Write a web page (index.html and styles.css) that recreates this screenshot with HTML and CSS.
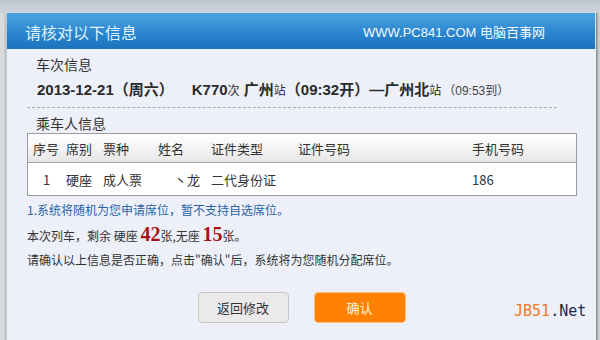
FILE: index.html
```html
<!DOCTYPE html>
<html lang="zh-CN">
<head>
<meta charset="utf-8">
<title>请核对以下信息</title>
<link rel="stylesheet" href="styles.css">
</head>
<body>
<div class="screen">
  <div class="side-left"></div>
  <div class="dialog">
    <div class="dlg-head">
      <span class="dlg-title">请核对以下信息</span>
      <span class="dlg-site">WWW.PC841.COM 电脑百事网</span>
    </div>
    <div class="dlg-body">
      <div class="sec-title">车次信息</div>
      <div class="train"><span class="t-date">2013-12-21（周六）</span><span class="t-no">K770</span><span class="t-small">次</span> <span class="t-st">广州</span><span class="t-small">站</span><span class="t-st">（09:32开）—广州北</span><span class="t-small">站</span><span class="t-arr">（09:53到）</span></div>
      <div class="dash"></div>
      <div class="sec-title">乘车人信息</div>
      <div class="ptable">
        <div class="prow phead">
          <span class="c1">序号</span><span class="c2">席别</span><span class="c3">票种</span><span class="c4">姓名</span><span class="c5">证件类型</span><span class="c6">证件号码</span><span class="c7">手机号码</span>
        </div>
        <div class="prow pbody">
          <span class="c1 num">1</span><span class="c2">硬座</span><span class="c3">成人票</span><span class="c4 name">丶龙</span><span class="c5">二代身份证</span><span class="c6"></span><span class="c7">186</span>
        </div>
      </div>
      <div class="note blue">1.系统将随机为您申请席位，暂不支持自选席位。</div>
      <div class="note">本次列车，剩余 硬座 <b class="big">42</b>张,无座 <b class="big">15</b>张。</div>
      <div class="note">请确认以上信息是否正确，点击"确认"后，系统将为您随机分配席位。</div>
      <div class="btns">
        <button class="btn btn-back">返回修改</button>
        <button class="btn btn-ok">确认</button>
      </div>
    </div>
    <div class="mark"><span class="mk-a">JB51</span><span class="mk-b">.Net</span></div>
  </div>
  <div class="side-right"></div>
</div>
</body>
</html>
```

FILE: styles.css
```css
html, body {
  margin: 0;
  padding: 0;
}
body {
  width: 600px;
  height: 340px;
  overflow: hidden;
  background: linear-gradient(#bcc5ce, #cfd5db 13px, #d3d6d9 13px);
  font-family: "Noto Sans CJK SC", "Liberation Sans", sans-serif;
  color: #333;
}
.screen {
  display: flex;
  padding-top: 13px;
  height: 327px;
}
.side-left {
  width: 6px;
  background: linear-gradient(90deg, #d8dadc 0, #d8dadc 4px, #b9bcbf 5px, #c9ccce 6px);
}
.side-right {
  width: 4px;
  background: linear-gradient(90deg, #8e9194 0, #8e9194 1px, #c4c7ca 2px, #cfd2d5 4px);
}
.dialog {
  position: relative;
  width: 589px;
  border-left: 1px solid #c3c8cd;
  background: #edf0f8;
  display: flex;
  flex-direction: column;
}
.dlg-head {
  height: 36px;
  background: linear-gradient(#4aa4e2, #2b86cf 55%, #1c72bd);
  display: flex;
  align-items: center;
  justify-content: space-between;
  padding: 0 50px 0 18px;
  border-right: 1px solid #cfe3f3;
}
.dlg-title {
  font-size: 16px;
  color: #dff3ff;
  margin-top: 2px;
}
.dlg-site {
  font-family: "Liberation Sans", "Noto Sans CJK SC", sans-serif;
  font-size: 13px;
  color: #f4faff;
}
.dlg-body {
  padding: 0 19px 0 20px;
}
.sec-title {
  font-size: 14px;
  line-height: 20px;
  padding-left: 9px;
  margin-top: 5px;
  color: #333;
}
.train {
  margin-top: 6px;
  line-height: 20px;
  padding-left: 10px;
  font-family: "Liberation Sans", "Noto Sans CJK SC", sans-serif;
  font-size: 15px;
  font-weight: bold;
  color: #2b2b2b;
  white-space: nowrap;
}
.t-date { margin-right: 18px; }
.t-small {
  font-weight: normal;
  font-size: 12px;
  font-family: "Noto Sans CJK SC", sans-serif;
}
.t-arr {
  font-weight: normal;
  font-size: 12px;
  color: #444;
  margin-left: 2px;
}
.dash {
  margin-top: 6px;
  margin-right: 20px;
  border-top: 1px dashed #a9aab0;
}
.dash + .sec-title {
  margin-top: 5px;
}
.ptable {
  border: 1px solid #9c9c9c;
  background: #fff;
}
.prow {
  display: flex;
  align-items: center;
  font-size: 13px;
  padding-left: 5px;
}
.phead {
  height: 28px;
  background: linear-gradient(#ffffff, #f4f4f4 50%, #e6e6e6);
  border-bottom: 1px solid #a4a4a4;
}
.pbody {
  height: 32px;
}
.c1 { width: 33px; }
.c2 { width: 37px; }
.c3 { width: 55px; }
.c4 { width: 53px; }
.c5 { width: 87px; }
.c6 { width: 174px; }
.c7 { flex: 1; }
.num { padding-left: 10px; width: 23px; }
.name { padding-left: 16px; width: 37px; }
.note {
  font-size: 12px;
  line-height: 24px;
  height: 24px;
  color: #333;
}
.note.blue {
  margin-top: 2px;
  color: #2a64a8;
}
.note + .note { margin-top: 2px; }
.note + .note + .note { margin-top: 0; }
.big {
  font-family: "Liberation Serif", serif;
  font-size: 20px;
  font-weight: bold;
  color: #a41414;
  line-height: 20px;
}
.btns {
  display: flex;
  justify-content: center;
  gap: 25px;
  margin-top: 20px;
  margin-left: -20px;
  margin-right: -19px;
}
.btn {
  width: 92px;
  height: 31px;
  border-radius: 4px;
  font-family: "Noto Sans CJK SC", sans-serif;
  font-size: 13px;
  padding: 0;
}
.btn-back {
  width: 91px;
  background: #ebe9ea;
  border: 1px solid #c6c6c6;
  color: #333;
}
.btn-ok {
  background: #ff8103;
  border: 1px solid #ffbf7a;
  color: #fff4d6;
}
.mark {
  position: absolute;
  left: 507px;
  top: 289px;
  font-family: "DejaVu Sans Mono", monospace;
  font-size: 15px;
}
.mk-a { color: #f07a25; }
.mk-b { color: #1a2a4e; }
```
